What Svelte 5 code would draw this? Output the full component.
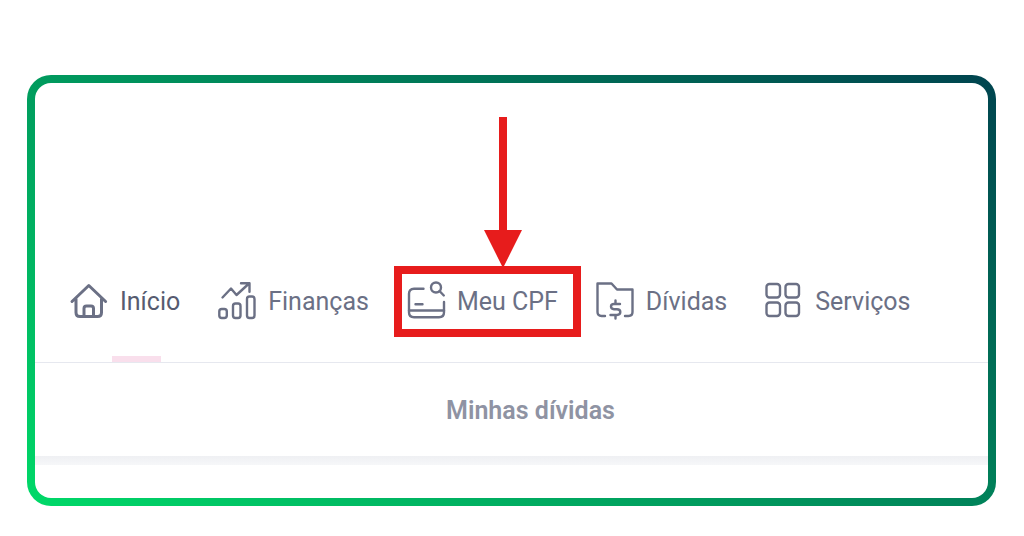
<!--
  App.svelte: the account menu with the "Meu CPF" item pointed out.
-->
<script>
  // The menu entries, in the order they are shown
  const items = [
    { id: "inicio", label: "Início" },
    { id: "financas", label: "Finanças" },
    { id: "cpf", label: "Meu CPF" },
    { id: "dividas", label: "Dívidas" },
    { id: "servicos", label: "Serviços" },
  ];

  const current = "inicio";
  const pointedOut = "cpf";
</script>

<main class="frame">
  <div class="screen">
    <nav class="menu">
      {#each items as item (item.id)}
        <a href="#{item.id}" class="item" class:current={item.id === current}>
          <svg class="icon" viewBox="0 0 38 38" aria-hidden="true">
            {#if item.id === "inicio"}
              <path d="M2 19.5 18.8 3.5 35.6 19.5M6 17v13.5q0 4 4 4h17.5q4 0 4-4V17" />
              <path d="M14 34V26.5q0-2.5 2.5-2.5h4.5q2.5 0 2.5 2.5V34" />
            {:else if item.id === "financas"}
              <rect x="1.3" y="27" width="7.5" height="9" rx="2.5" />
              <rect x="15" y="21.5" width="7.5" height="14.500" rx="2.5" />
              <rect x="29" y="14.5" width="7.5" height="21.500" rx="2.5" />
              <path d="M4.500 15.500 13 6.500l5.500 6.500L31 1.500M23 1.200h8.500v8.500" />
            {:else if item.id === "cpf"}
              <path d="M16.500 6.800H7q-5 0-5 5v18.500q0 5 5 5h25q5 0 5-5V20" />
              <path d="M2 28.500h35M8.500 22.200h7" />
              <circle cx="29" cy="5.500" r="5" />
              <path d="m32.500 9 4.300 4.500" />
            {:else if item.id === "dividas"}
              <path d="M9 34H5.500Q1.500 34 1.500 30V1.500h14l5.500 6h15.500V30q0 4-4 4H29" />
              <path d="M24 22h-6q-3 0-3 2.500t3 2.700h3q3.300 0 3.300 2.900T21 33h-6.500M19.500 18.500V22M19.500 33v3.500" />
            {:else}
              <rect x="1.500" y="2" width="13.500" height="13.500" rx="3" />
              <rect x="20.500" y="2" width="13.500" height="13.500" rx="3" />
              <rect x="1.500" y="20.500" width="13.500" height="13.500" rx="3" />
              <rect x="20.500" y="20.500" width="13.500" height="13.500" rx="3" />
            {/if}
          </svg>
          <span class="label">{item.label}</span>

          {#if item.id === pointedOut}
            <span class="marker" aria-hidden="true">
              <svg class="arrow" viewBox="0 0 38 151">
                <path d="M15 0h8v113h15L19 151 0 113h15z" />
              </svg>
            </span>
          {/if}
        </a>
      {/each}
    </nav>

    <h2 class="subtitle">Minhas dívidas</h2>
    <div class="divider"></div>
    <div class="content"></div>
  </div>
</main>

<style>
  :global(body) {
    margin: 0;
    background: #fff;
  }

  /* Rounded frame with a gradient border */
  .frame {
    margin: 75px 28px 30px 27px;
    padding: 8px;
    border-radius: 24px;
    background: linear-gradient(32deg, #00d968, #00444f);
    font-family: Roboto, "Liberation Sans", sans-serif;
  }

  .screen {
    overflow: hidden;
    border-radius: 16px;
    background: #fff;
  }

  .menu {
    display: flex;
    gap: 38px;
    padding: 198px 35px 41px;
    border-bottom: 1px solid #e6e8ef;
  }

  .item {
    position: relative;
    display: flex;
    align-items: center;
    gap: 12px;
    color: #6b7085;
    font-size: 25px;
    line-height: 38px;
    text-decoration: none;
    white-space: nowrap;
  }

  .item.current {
    color: #565b70;
  }

  /* Pink bar under the current entry */
  .item.current::after {
    content: "";
    position: absolute;
    bottom: -41px;
    left: 42px;
    width: 49px;
    height: 6px;
    background: #f9dfec;
  }

  .label {
    padding-top: 2px;
  }

  .icon {
    flex: none;
    width: 38px;
    height: 38px;
    overflow: visible;
    fill: none;
    stroke: #6b7085;
    stroke-width: 2.4;
    stroke-linecap: round;
    stroke-linejoin: round;
  }

  .current .icon {
    stroke-width: 3;
  }

  /* Red box and arrow drawn over the menu */
  .marker {
    position: absolute;
    inset: -15px -23px -16px -13px;
    border: 8px solid #e71c1c;
    pointer-events: none;
  }

  .arrow {
    position: absolute;
    bottom: 100%;
    left: 82px;
    width: 38px;
    height: 151px;
    margin-bottom: 6px;
    fill: #e71c1c;
  }

  .subtitle {
    margin: 0;
    padding: 29px 0 26px 38px;
    color: #8f93a3;
    font-size: 25px;
    font-weight: 600;
    line-height: 38px;
    text-align: center;
  }

  .divider {
    height: 9px;
    background: linear-gradient(#eff0f3, #f6f7f9);
  }

  .content {
    height: 33px;
  }
</style>
